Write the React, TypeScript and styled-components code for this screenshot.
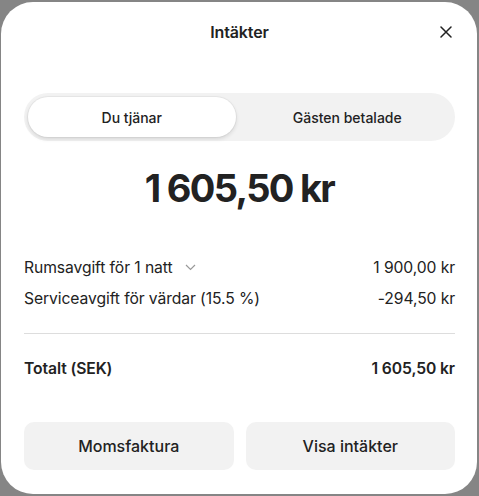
import React, { useState } from "react"
import styled, { createGlobalStyle } from "styled-components"

const GlobalStyle = createGlobalStyle`
  html, body {
    margin: 0;
    padding: 0;
    background: #858585;
  }
  body {
    font-family: Inter, "Noto Sans", "Liberation Sans", sans-serif;
    color: #222222;
    -webkit-font-smoothing: antialiased;
  }
`

const Backdrop = styled.div`
  width: 479px;
  height: 496px;
  padding: 2px 2px 2px 1px;
  box-sizing: border-box;
`

const Modal = styled.div`
  height: 100%;
  background: #fff;
  border-radius: 32px;
  display: flex;
  flex-direction: column;
  padding: 0 22px 0 23px;
  box-sizing: border-box;
`

const Header = styled.div`
  height: 60px;
  display: grid;
  grid-template-columns: 1fr auto 1fr;
  align-items: center;
`

const Title = styled.h1`
  grid-column: 2;
  margin: 0;
  font-size: 16px;
  font-weight: 600;
  letter-spacing: -0.1px;
`

const CloseButton = styled.button`
  justify-self: end;
  width: 28px;
  height: 28px;
  margin-right: -5px;
  border: none;
  background: none;
  padding: 0;
  display: flex;
  align-items: center;
  justify-content: center;
  cursor: pointer;
  color: #222;
`

const Segmented = styled.div`
  margin-top: 31px;
  height: 48px;
  padding: 4px;
  box-sizing: border-box;
  border-radius: 24px;
  background: #f2f2f2;
  display: grid;
  grid-template-columns: 1fr 1fr;
  gap: 8px;
`

const Segment = styled.button<{ $active: boolean }>`
  border: none;
  border-radius: 20px;
  font-family: inherit;
  font-size: 14px;
  font-weight: 500;
  color: #222;
  cursor: pointer;
  background: ${(p) => (p.$active ? "#fff" : "transparent")};
  box-shadow: ${(p) =>
    p.$active ? "0 0 0 1px rgba(0,0,0,0.04), 0 2px 4px rgba(0,0,0,0.12)" : "none"};
`

const Amount = styled.div`
  margin-top: 23px;
  height: 48px;
  line-height: 48px;
  text-align: center;
  font-size: 38px;
  font-weight: 700;
  letter-spacing: -1.7px;
`

const Rows = styled.div`
  margin-top: 45px;
  display: flex;
  flex-direction: column;
  gap: 11px;
`

const Row = styled.div<{ $bold?: boolean }>`
  display: flex;
  justify-content: space-between;
  align-items: center;
  height: 20px;
  font-size: 15.7px;
  font-weight: ${(p) => (p.$bold ? 600 : 400)};
  letter-spacing: -0.1px;
`

const Label = styled.span`
  display: flex;
  align-items: center;
  gap: 13px;
`

const Divider = styled.hr`
  margin: 25px 0 24px;
  border: none;
  border-top: 1px solid #dddddd;
`

const Actions = styled.div`
  margin-top: 44px;
  display: grid;
  grid-template-columns: 1fr 1fr;
  gap: 12px;
`

const ActionButton = styled.button`
  height: 48px;
  border: none;
  border-radius: 10px;
  background: #f2f2f2;
  font-family: inherit;
  font-size: 16px;
  font-weight: 500;
  color: #222;
  cursor: pointer;
`

export default function App() {
  const [tab, setTab] = useState<"host" | "guest">("host")

  return (
    <Backdrop>
      <GlobalStyle />
      <Modal>
        <Header>
          <Title>Intäkter</Title>
          <CloseButton aria-label="Stäng">
            <svg width="12" height="12" viewBox="0 0 12 12" fill="none">
              <path d="M1 1l10 10M11 1L1 11" stroke="#222" strokeWidth="1.5" strokeLinecap="round" />
            </svg>
          </CloseButton>
        </Header>

        <Segmented>
          <Segment $active={tab === "host"} onClick={() => setTab("host")}>
            Du tjänar
          </Segment>
          <Segment $active={tab === "guest"} onClick={() => setTab("guest")}>
            Gästen betalade
          </Segment>
        </Segmented>

        <Amount>1 605,50 kr</Amount>

        <Rows>
          <Row>
            <Label>
              Rumsavgift för 1 natt
              <svg width="11" height="7" viewBox="0 0 11 7" fill="none">
                <path d="M1 1l4.5 4.5L10 1" stroke="#999" strokeWidth="1.2" />
              </svg>
            </Label>
            <span>1 900,00 kr</span>
          </Row>
          <Row>
            <span>Serviceavgift för värdar (15.5 %)</span>
            <span>-294,50 kr</span>
          </Row>
        </Rows>

        <Divider />

        <Row $bold>
          <span>Totalt (SEK)</span>
          <span>1 605,50 kr</span>
        </Row>

        <Actions>
          <ActionButton>Momsfaktura</ActionButton>
          <ActionButton>Visa intäkter</ActionButton>
        </Actions>
      </Modal>
    </Backdrop>
  )
}
